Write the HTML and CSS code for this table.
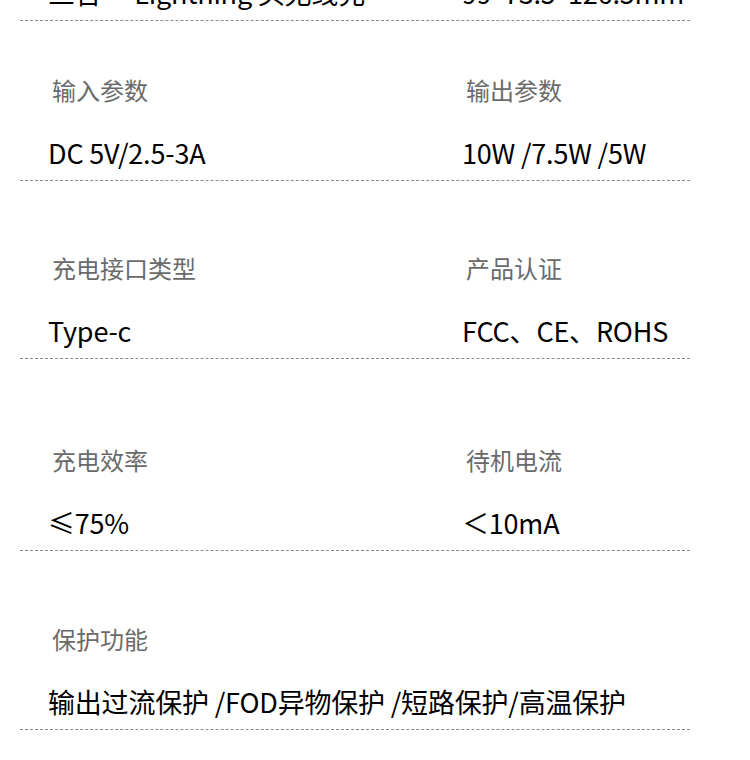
FILE: index.html
```html
<!DOCTYPE html>
<html lang="zh">
<head>
<meta charset="utf-8">
<link rel="stylesheet" href="styles.css">
</head>
<body>
<div class="sheet">
  <div class="row row-top">
    <div class="cell"><div class="value">三合一 Lightning 头无线充</div></div>
    <div class="cell"><div class="value">99*73.5*126.5mm</div></div>
  </div>
  <div class="row row-1">
    <div class="cell"><div class="label">输入参数</div><div class="value">DC 5V/2.5-3A</div></div>
    <div class="cell"><div class="label">输出参数</div><div class="value">10W /7.5W /5W</div></div>
  </div>
  <div class="row row-2">
    <div class="cell"><div class="label">充电接口类型</div><div class="value">Type-c</div></div>
    <div class="cell"><div class="label">产品认证</div><div class="value">FCC、CE、ROHS</div></div>
  </div>
  <div class="row row-3">
    <div class="cell"><div class="label">充电效率</div><div class="value">≤75%</div></div>
    <div class="cell"><div class="label">待机电流</div><div class="value">＜10mA</div></div>
  </div>
  <div class="row row-4 row-wide">
    <div class="cell"><div class="label">保护功能</div><div class="value">输出过流保护 /FOD异物保护 /短路保护/高温保护</div></div>
  </div>
</div>
</body>
</html>
```
FILE: styles.css
```css
html, body {
  margin: 0;
  padding: 0;
  background: #ffffff;
}
body {
  font-family: "Noto Sans CJK SC", "Noto Sans", sans-serif;
  width: 750px;
  height: 760px;
  overflow: hidden;
}
.sheet {
  width: 670px;
  margin-left: 20px;
}
.row {
  display: grid;
  grid-template-columns: 414px 1fr;
  padding-left: 28px;
  padding-bottom: 10px;
  border-bottom: 1px dashed #8a8a8a;
}
.row-wide {
  grid-template-columns: 1fr;
}
.row-top {
  margin-top: -24px;
}
.row-1 { padding-top: 54px; }
.row-2 { padding-top: 72px; }
.row-3 { padding-top: 86px; }
.row-4 { padding-top: 73px; }
.cell {
  display: flex;
  flex-direction: column;
}
.label {
  height: 30px;
  line-height: 30px;
  font-size: 24px;
  color: #6a6a6a;
  padding-left: 4px;
  margin-bottom: 31px;
  white-space: nowrap;
}
.value {
  height: 34px;
  line-height: 34px;
  font-size: 27px;
  font-weight: 400;
  color: #000000;
  letter-spacing: -0.2px;
  white-space: nowrap;
}
```
